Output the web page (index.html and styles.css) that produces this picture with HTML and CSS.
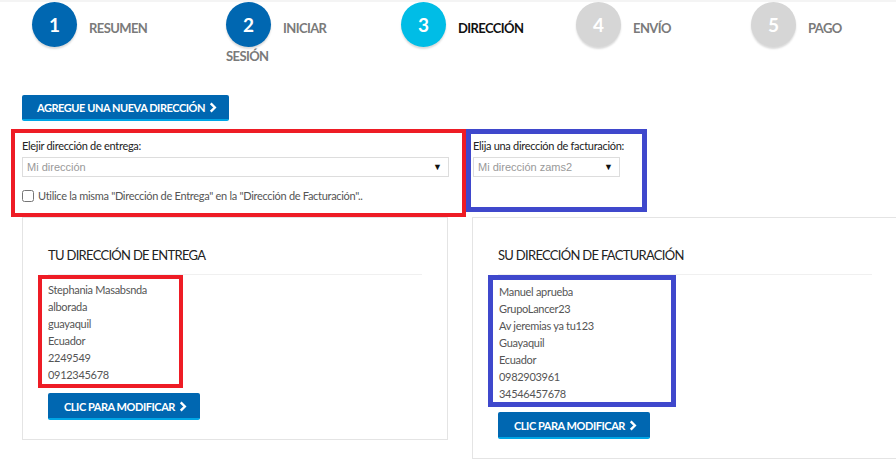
FILE: index.html
```html
<!DOCTYPE html>
<html lang="es">
<head>
    <meta charset="UTF-8">
    <title>Dirección</title>
    <link rel="stylesheet" href="styles.css">
</head>
<body>
    <ol class="steps">
        <li class="step done"><span class="step-num">1</span><span class="step-label">RESUMEN</span></li>
        <li class="step done"><span class="step-num">2</span><span class="step-label">INICIAR SESIÓN</span></li>
        <li class="step current"><span class="step-num">3</span><span class="step-label">DIRECCIÓN</span></li>
        <li class="step"><span class="step-num">4</span><span class="step-label">ENVÍO</span></li>
        <li class="step"><span class="step-num">5</span><span class="step-label">PAGO</span></li>
    </ol>

    <div class="add-row">
        <a class="btn" href="#">AGREGUE UNA NUEVA DIRECCIÓN <svg class="chev" viewBox="0 0 8 12"><path d="M1.5 1.5 L6 6 L1.5 10.5" /></svg></a>
    </div>

    <div class="pick-row">
        <div class="pick pick-delivery">
            <label class="pick-label">Elejir dirección de entrega:</label>
            <div class="select-box"><span>Mi dirección</span><span class="arrow">▼</span></div>
            <label class="same-check"><input type="checkbox"> Utilice la misma "Dirección de Entrega" en la "Dirección de Facturación"..</label>
        </div>
        <div class="pick pick-billing">
            <label class="pick-label">Elija una dirección de facturación:</label>
            <div class="select-box select-small"><span>Mi dirección zams2</span><span class="arrow">▼</span></div>
        </div>
    </div>

    <div class="cards">
        <div class="card">
            <h3 class="card-title">TU DIRECCIÓN DE ENTREGA</h3>
            <div class="address mark-red">
                <div>Stephania Masabsnda</div>
                <div>alborada</div>
                <div>guayaquil</div>
                <div>Ecuador</div>
                <div>2249549</div>
                <div>0912345678</div>
            </div>
            <a class="btn btn-edit" href="#">CLIC PARA MODIFICAR <svg class="chev" viewBox="0 0 8 12"><path d="M1.5 1.5 L6 6 L1.5 10.5" /></svg></a>
        </div>
        <div class="card">
            <h3 class="card-title">SU DIRECCIÓN DE FACTURACIÓN</h3>
            <div class="address mark-blue">
                <div>Manuel aprueba</div>
                <div>GrupoLancer23</div>
                <div>Av jeremias ya tu123</div>
                <div>Guayaquil</div>
                <div>Ecuador</div>
                <div>0982903961</div>
                <div>34546457678</div>
            </div>
            <a class="btn btn-edit" href="#">CLIC PARA MODIFICAR <svg class="chev" viewBox="0 0 8 12"><path d="M1.5 1.5 L6 6 L1.5 10.5" /></svg></a>
        </div>
    </div>
</body>
</html>
```

FILE: styles.css
```css
* {
    box-sizing: border-box;
}

body {
    margin: 0;
    background-color: #fff;
    color: #333;
    font-family: "Lato", "Roboto", sans-serif;
    overflow: hidden;
    border-top: 2px solid #f4f4f4;
}

/* steps */
.steps {
    display: flex;
    gap: 45px;
    list-style: none;
    margin: 0;
    padding: 0 0 0 32px;
    height: 93px;
}

.step {
    width: 130px;
    font-size: 13px;
    font-weight: bold;
    line-height: 18px;
    color: #7a7a7a;
    letter-spacing: -0.6px;
}

.step:first-child {
    margin-right: 19px;
}

.step-num {
    display: inline-block;
    width: 45px;
    height: 45px;
    line-height: 45px;
    border-radius: 50%;
    background-color: #d6d6d6;
    color: #fff;
    text-align: center;
    font-size: 19px;
    letter-spacing: 0;
    vertical-align: 1px;
    margin-right: 12px;
    box-shadow: 0 2px 2px rgba(0, 0, 0, 0.15);
}

.step.done .step-num {
    background-color: #0067b1;
}

.step.current .step-num {
    background-color: #00bde6;
}

.step.current .step-label {
    color: #111;
}

/* buttons */
.btn {
    display: inline-flex;
    align-items: center;
    gap: 4px;
    height: 26px;
    padding: 1px 15px 0;
    background-color: #0067b1;
    border-bottom: 2px solid #00a6e6;
    border-radius: 2px;
    color: #fff;
    font-size: 11px;
    font-weight: bold;
    letter-spacing: -0.45px;
    white-space: nowrap;
    text-decoration: none;
}

.chev {
    flex-shrink: 0;
    width: 8px;
    height: 11px;
    fill: none;
    stroke: #fff;
    stroke-width: 2.6;
}

.add-row {
    padding-left: 22px;
    margin-bottom: 8px;
}

.add-row .btn {
    width: 207px;
}

/* address pickers */
.pick-row {
    display: flex;
    align-items: flex-start;
    padding-left: 11px;
}

.pick {
    display: flex;
    flex-direction: column;
}

.pick-label {
    font-size: 11px;
    letter-spacing: -0.3px;
    color: #222;
    line-height: 14px;
    white-space: nowrap;
}

.pick-delivery {
    width: 455px;
    height: 88px;
    border: 4px solid #ee1c25;
    padding: 6px 13px 0 7px;
}

.pick-billing {
    width: 181px;
    height: 83px;
    border: 5px solid #3f48cc;
    padding: 5px 4px 0 2px;
}

.select-box {
    display: flex;
    justify-content: space-between;
    align-items: center;
    height: 20px;
    margin-top: 4px;
    padding: 0 6px 0 4px;
    border: 1px solid #ddd;
    font-family: "Liberation Sans", Arial, sans-serif;
    font-size: 11px;
    color: #999;
}

.select-small {
    width: 147px;
}

.arrow {
    color: #111;
    font-size: 9px;
}

.same-check {
    display: flex;
    align-items: center;
    gap: 4px;
    margin-top: 12px;
    font-size: 11px;
    letter-spacing: -0.3px;
    color: #555;
    white-space: nowrap;
}

.same-check input {
    margin: 0;
    width: 12px;
    height: 12px;
}

/* address cards */
.cards {
    display: flex;
    align-items: flex-start;
    gap: 24px;
    padding-left: 22px;
}

.card {
    width: 426px;
    flex-shrink: 0;
    border: 1px solid #e4e4e4;
    padding: 28px 25px 19px 25px;
}

.card-title {
    margin: 0;
    padding-bottom: 10px;
    border-bottom: 1px solid #f0f0f0;
    font-size: 13px;
    letter-spacing: -0.7px;
    font-weight: normal;
    color: #222;
    line-height: 18px;
}

.address {
    display: inline-block;
    margin-left: -10px;
    font-size: 11px;
    letter-spacing: -0.3px;
    line-height: 17px;
    color: #555;
    white-space: nowrap;
}

.mark-red {
    border: 4px solid #ee1c25;
    padding: 2px 10px 1px 6px;
    width: 145px;
}

.mark-blue {
    border: 5px solid #3f48cc;
    padding: 3px 10px 0 6px;
    width: 188px;
}

.btn-edit {
    display: flex;
    width: 152px;
    height: 27px;
    margin-top: 5px;
    padding: 1px 16px 0;
}
```
